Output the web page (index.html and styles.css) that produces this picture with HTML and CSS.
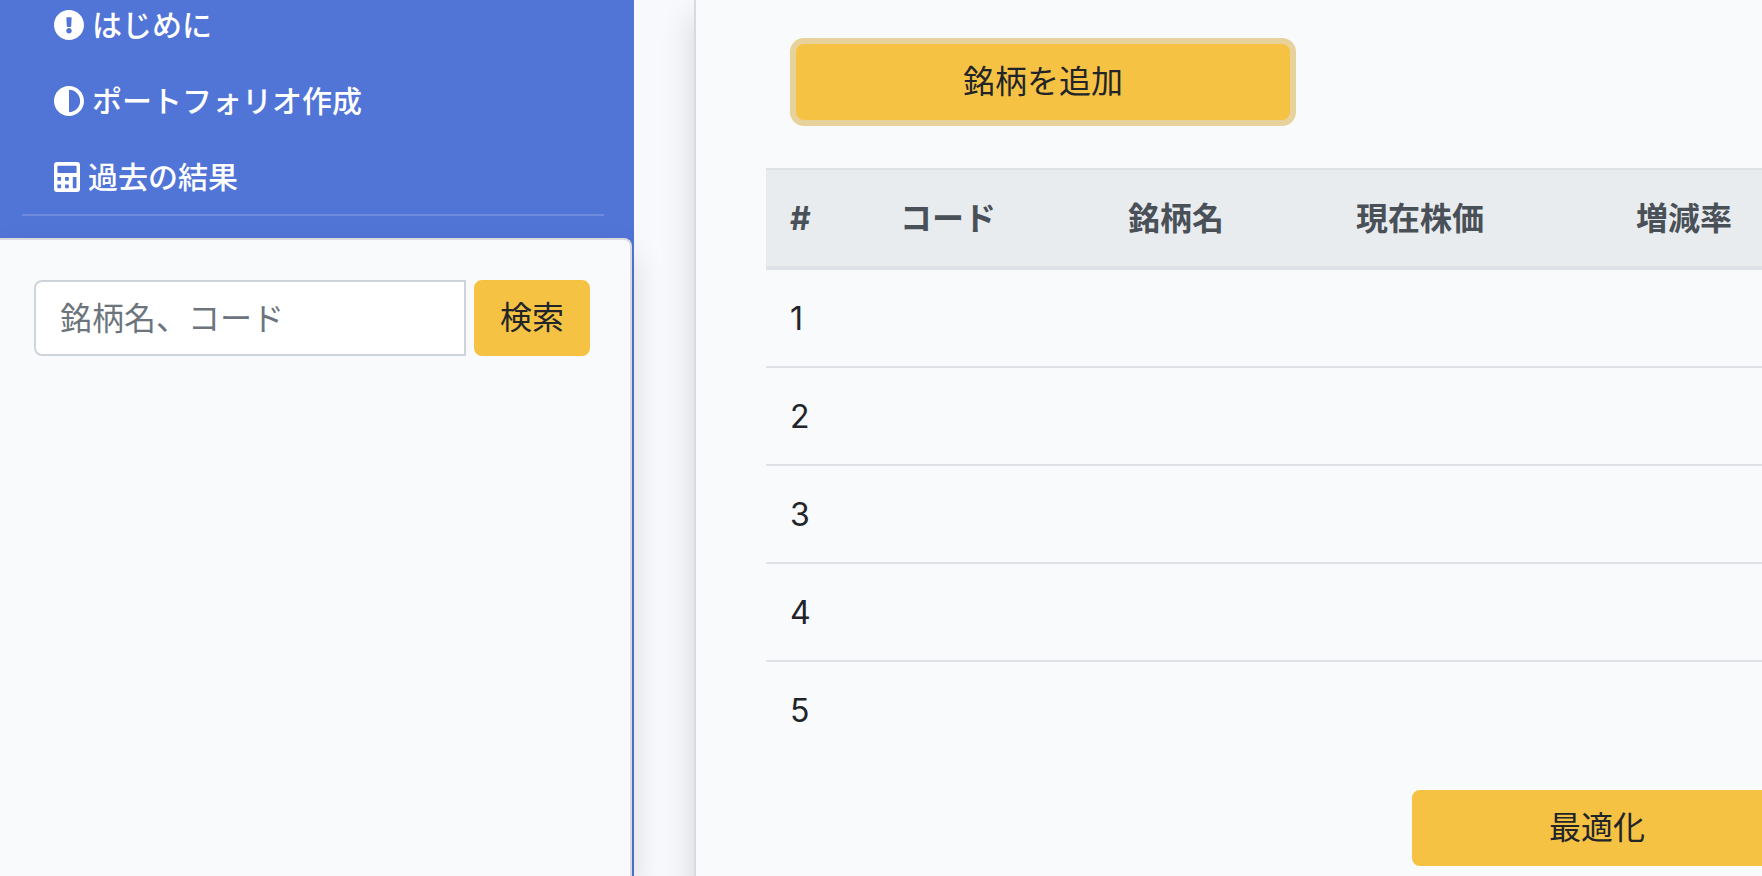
FILE: index.html
```html
<!DOCTYPE html>
<html lang="ja">
<head>
<meta charset="utf-8">
<title>ポートフォリオ作成</title>
<link rel="stylesheet" href="styles.css">
</head>
<body>
<div class="page">
  <aside class="sidebar">
    <nav>
      <ul class="nav-list">
        <li><a class="nav-link" href="#">
          <svg class="icon" width="30" height="30" viewBox="8 8 496 496" aria-hidden="true"><path fill="currentColor" d="M504 256c0 137-111 248-248 248S8 393 8 256 119 8 256 8s248 111 248 248zm-248 50c-25.400 0-46 20.600-46 46s20.600 46 46 46 46-20.600 46-46-20.600-46-46-46zm-43.700-165.300 7.400 136c.4 6.400 5.700 11.300 12 11.300h48.500c6.400 0 11.600-5 12-11.300l7.400-136c.4-6.900-5.100-12.700-12-12.700h-63.400c-6.900 0-12.300 5.800-11.900 12.700z"/></svg>
          <span>はじめに</span></a></li>
        <li><a class="nav-link" href="#">
          <svg class="icon" width="30" height="30" viewBox="8 8 496 496" aria-hidden="true"><path fill="currentColor" d="M8 256c0 137 111 248 248 248s248-111 248-248S393 8 256 8 8 119 8 256zm248 184V72c101.700 0 184 82.300 184 184 0 101.700-82.300 184-184 184z"/></svg>
          <span>ポートフォリオ作成</span></a></li>
        <li><a class="nav-link" href="#">
          <svg class="icon" width="26" height="30" viewBox="0 0 26 30" aria-hidden="true"><path fill="currentColor" fill-rule="evenodd" d="M3 0h20a3 3 0 0 1 3 3v24a3 3 0 0 1-3 3H3a3 3 0 0 1-3-3V3a3 3 0 0 1 3-3zM4.200 3.700a.8.8 0 0 0-.8.8v5.700a.8.8 0 0 0 .8.8h17.600a.8.8 0 0 0 .8-.8V4.500a.8.8 0 0 0-.8-.8zM3.400 15v3.700h3.700V15zM11.100 15v3.700h3.700V15zM18.800 15v11.200h3.700V15zM3.400 22.500v3.700h3.700v-3.700zM11.100 22.500v3.700h3.700v-3.700z"/></svg>
          <span>過去の結果</span></a></li>
      </ul>
    </nav>
    <hr class="divider">
    <section class="search-card">
      <form class="search-form">
        <input class="search-input" type="text" placeholder="銘柄名、コード" aria-label="銘柄名、コード">
        <button class="btn" type="button">検索</button>
      </form>
    </section>
  </aside>
  <main class="content">
    <section class="card">
      <div class="add-row">
        <button class="btn btn-add" type="button">銘柄を追加</button>
      </div>
      <table class="stocks">
        <colgroup>
          <col class="col-index"><col class="col-code"><col class="col-name"><col class="col-price"><col>
        </colgroup>
        <thead>
          <tr><th scope="col">#</th><th scope="col">コード</th><th scope="col">銘柄名</th><th scope="col">現在株価</th><th scope="col">増減率</th></tr>
        </thead>
        <tbody>
          <tr><td>1</td><td></td><td></td><td></td><td></td></tr>
          <tr><td>2</td><td></td><td></td><td></td><td></td></tr>
          <tr><td>3</td><td></td><td></td><td></td><td></td></tr>
          <tr><td>4</td><td></td><td></td><td></td><td></td></tr>
          <tr><td>5</td><td></td><td></td><td></td><td></td></tr>
        </tbody>
      </table>
      <div class="submit-row">
        <button class="btn btn-submit" type="button">最適化</button>
      </div>
    </section>
  </main>
</div>
</body>
</html>
```
FILE: styles.css
```css
* {
  box-sizing: border-box;
}

body {
  margin: 0;
  background: #f8f9fd;
  color: #212529;
  font-family: Inter, "Noto Sans CJK JP", sans-serif;
  font-size: 32px;
  line-height: 48px;
}

.page {
  display: flex;
  height: 100vh;
  overflow: hidden;
}

.sidebar {
  display: flex;
  flex: 0 0 634px;
  flex-direction: column;
  min-width: 0;
  background: #5174d7;
}

.nav-list {
  display: flex;
  flex-direction: column;
  gap: 26px;
  margin: 0;
  padding: 0 54px;
  list-style: none;
}

.nav-link {
  display: flex;
  align-items: center;
  gap: 8px;
  height: 50px;
  color: #fff;
  font-size: 30px;
  font-weight: 500;
  text-decoration: none;
}

.icon {
  display: block;
  flex: none;
}

.divider {
  width: auto;
  height: 2px;
  margin: 12px 30px 22px 22px;
  border: 0;
  background: #6e8bdd;
}

.search-card {
  flex: 1;
  margin-right: 2px;
  padding: 40px 40px 40px 34px;
  border: 2px solid #d9dadd;
  border-width: 2px 2px 0 0;
  border-radius: 0 8px 0 0;
  background: #f8fafc;
  box-shadow: 0 16px 32px rgba(0, 0, 0, 0.15);
}

.search-form {
  display: flex;
  gap: 8px;
}

.search-input {
  flex: 1;
  min-width: 0;
  height: 76px;
  padding: 12px 24px;
  border: 2px solid #ced4da;
  border-radius: 8px 0 0 8px;
  background: #fff;
  color: #495057;
  font: inherit;
}

.search-input::placeholder {
  color: #6c757d;
  opacity: 1;
}

.btn {
  padding: 12px 24px;
  border: 2px solid #f5c244;
  border-radius: 8px;
  background: #f5c244;
  color: #212529;
  font: inherit;
}

.content {
  flex: 1;
  min-width: 0;
  padding-left: 60px;
}

.card {
  width: 1806px;
  min-height: 100%;
  padding: 44px 70px;
  border: 2px solid #d9dadd;
  border-width: 0 2px;
  background: #f8fafc;
  box-shadow: 0 16px 32px rgba(0, 0, 0, 0.15);
}

.add-row {
  width: 554px;
  padding: 0 30px;
}

.btn-add {
  width: 100%;
  box-shadow: 0 0 0 6px #e7d29b;
}

.stocks {
  width: 100%;
  margin: 48px 0 32px;
  border-collapse: separate;
  border-spacing: 0;
  table-layout: fixed;
}

.col-index {
  width: 110px;
}

.col-code,
.col-name {
  width: 228px;
}

.col-price {
  width: 280px;
}

.stocks th,
.stocks td {
  padding: 25px 24px 23px;
  border-top: 2px solid #dee2e6;
  text-align: left;
}

.stocks th {
  border-bottom: 4px solid #dee2e6;
  background: #e8ecef;
  color: #495057;
  font-weight: 700;
}

.stocks tbody tr:first-child td {
  border-top: 0;
}

.submit-row {
  display: flex;
  justify-content: center;
}

.btn-submit {
  width: 370px;
}
```
